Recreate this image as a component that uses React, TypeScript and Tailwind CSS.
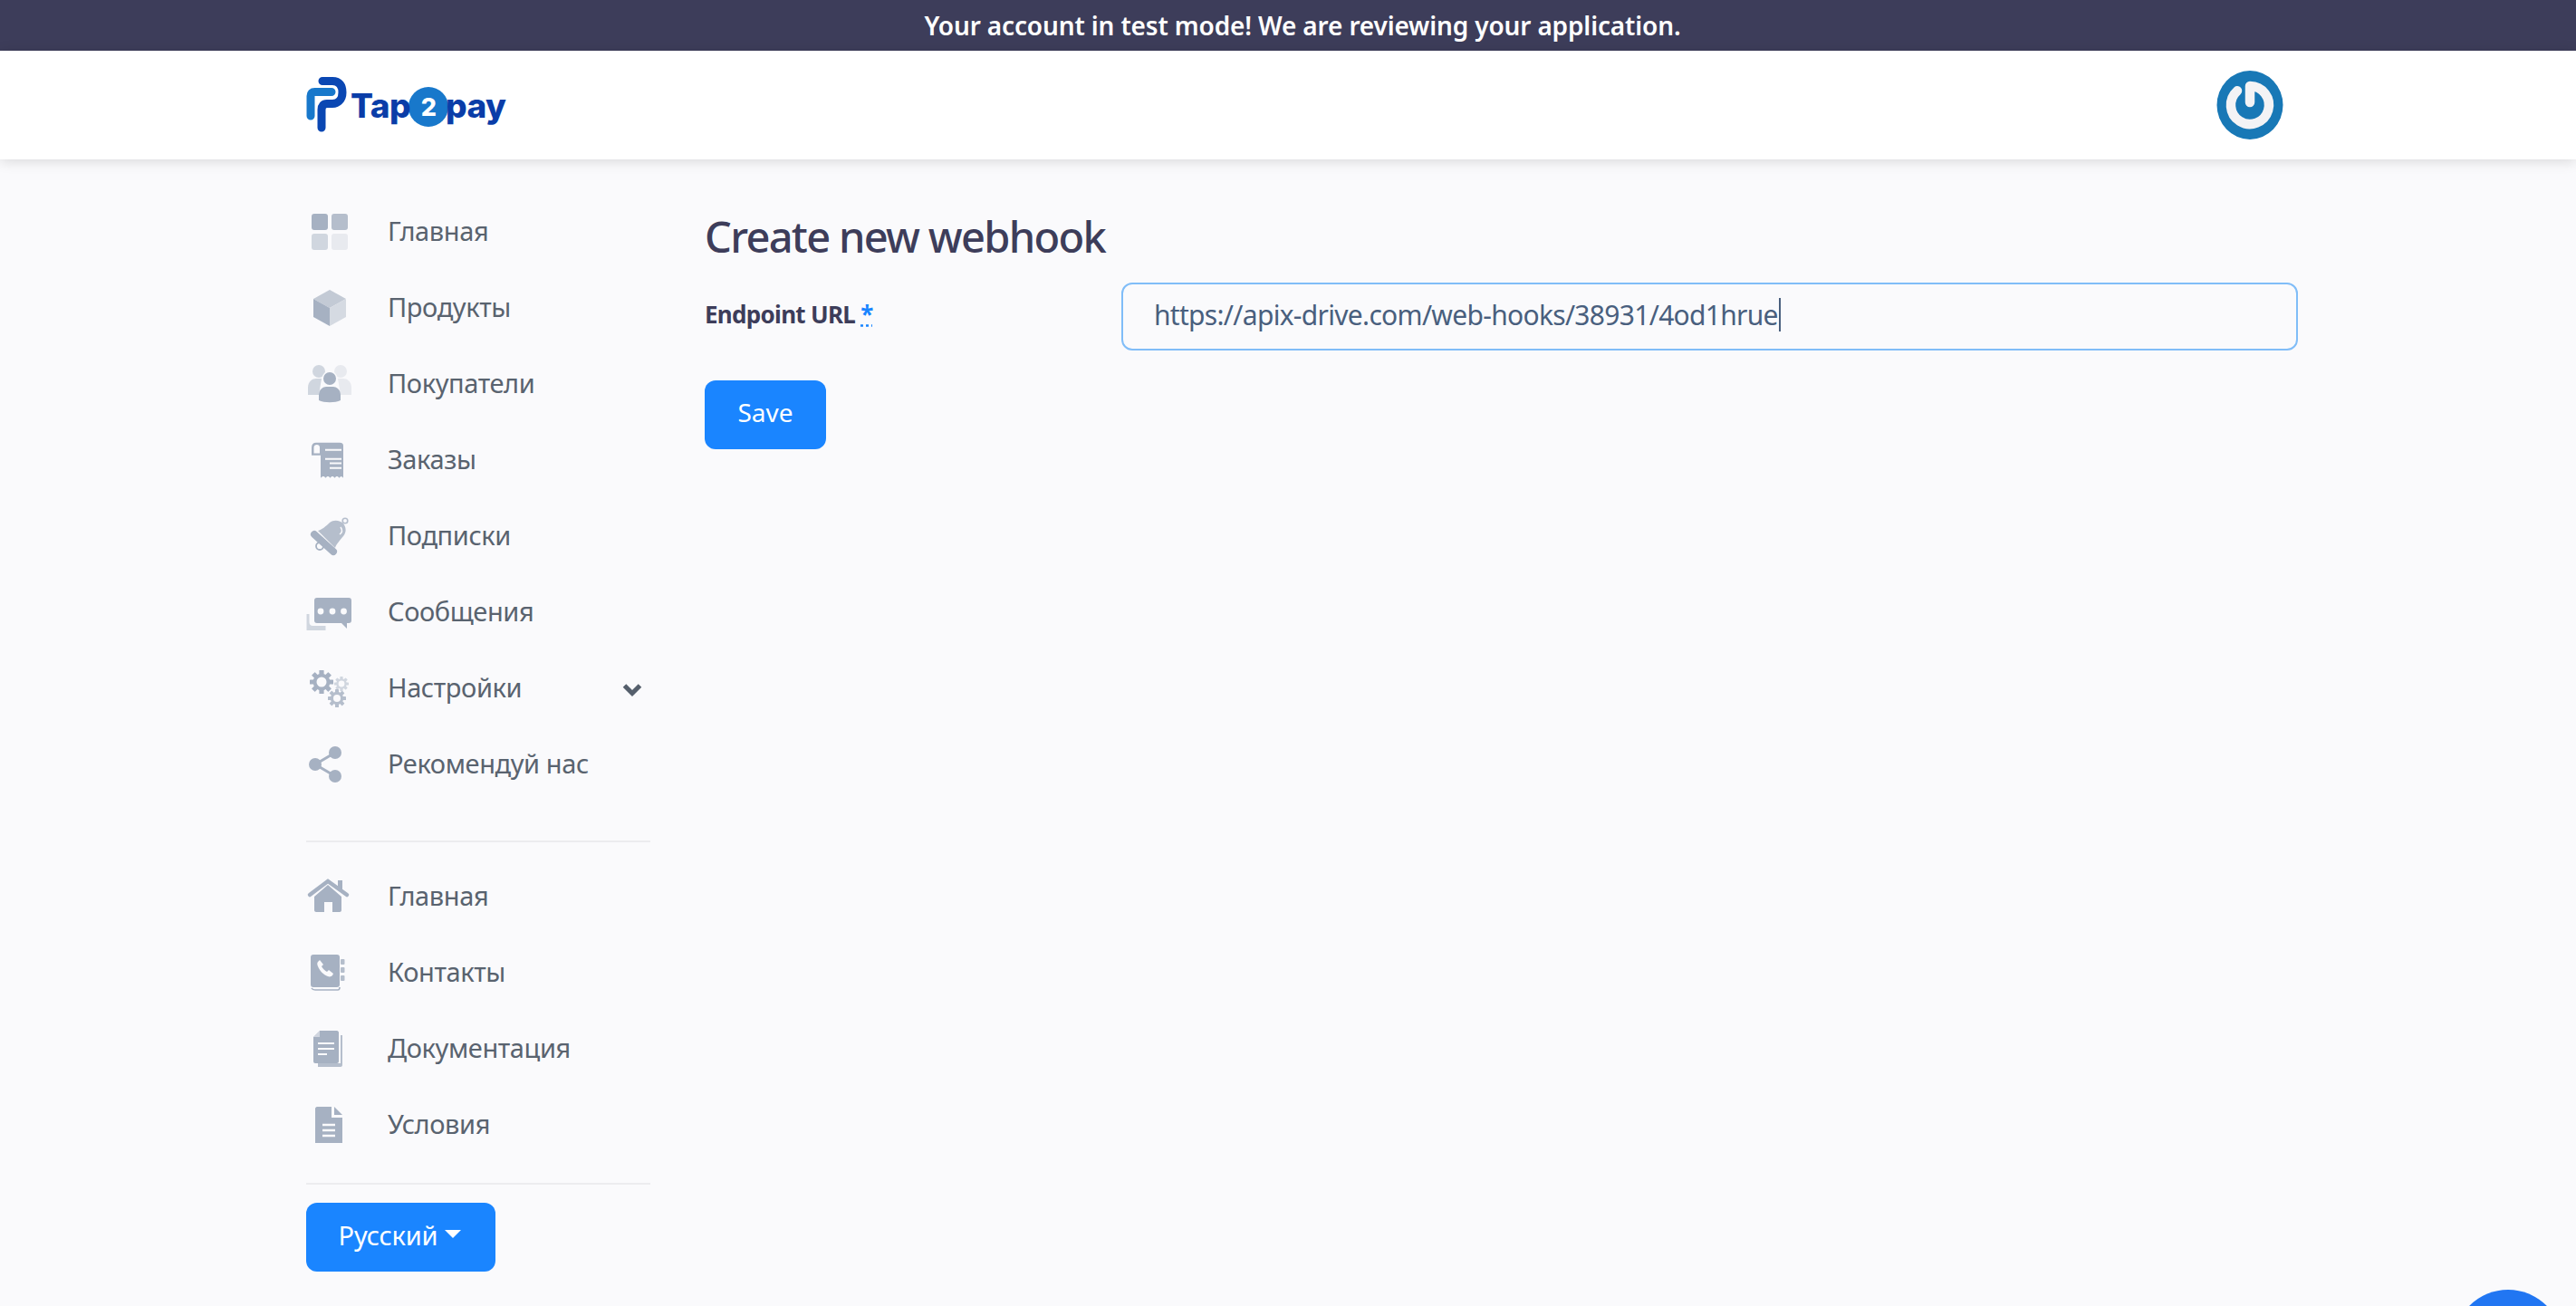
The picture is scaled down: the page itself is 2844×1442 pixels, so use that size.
import React from "react";

const C1 = "#a6b1c2";
const C2 = "#b5becc";
const C3 = "#d0d6df";
const C4 = "#e8eaef";

function Svg({ children }: { children: React.ReactNode }) {
  return (
    <svg width="48" height="48" viewBox="0 0 48 48" className="overflow-visible shrink-0">
      {children}
    </svg>
  );
}

function Gear({ x, y, r, hole, fill }: { x: number; y: number; r: number; hole: number; fill: string }) {
  const teeth = Array.from({ length: 8 }, (_, i) => i * 45);
  return (
    <g transform={`translate(${x} ${y})`}>
      {teeth.map((a) => (
        <rect key={a} x={-r * 0.2} y={-r} width={r * 0.4} height={r * 0.5} fill={fill} transform={`rotate(${a})`} rx={0.6} />
      ))}
      <circle r={r * 0.72} fill={fill} />
      <circle r={hole} fill="#fafafc" />
    </g>
  );
}

const icons: Record<string, React.ReactNode> = {
  grid: (
    <Svg>
      <rect x="4" y="4" width="18" height="18" rx="3" fill={C1} />
      <rect x="26" y="4" width="18" height="18" rx="3" fill={C2} />
      <rect x="4" y="26" width="18" height="18" rx="3" fill={C3} />
      <rect x="26" y="26" width="18" height="18" rx="3" fill={C4} />
    </Svg>
  ),
  cube: (
    <Svg>
      <path d="M24 4 42 14 24 24 6 14Z" fill="#c3cad5" />
      <path d="M6 14 24 24V44L6 34Z" fill={C1} />
      <path d="M42 14 24 24V44L42 34Z" fill="#d5dae2" />
    </Svg>
  ),
  people: (
    <Svg>
      <circle cx="12" cy="10" r="7" fill={C3} />
      <circle cx="36" cy="10" r="7" fill={C4} />
      <path d="M0 36V28C0 21 5 18 9 18H15L12 36Z" fill={C3} />
      <path d="M48 36V28C48 21 43 18 39 18H33L36 36Z" fill={C4} />
      <circle cx="24" cy="18" r="8.5" fill="#fafafc" />
      <circle cx="24" cy="18" r="7" fill={C1} />
      <path d="M12 42V36C12 30 17 27 20 27H28C31 27 36 30 36 36V42C30 45 18 45 12 42Z" fill={C1} />
    </Svg>
  ),
  receipt: (
    <Svg>
      <path d="M4 18.7V10C4 6.5 6 4.7 9 4.7H35C38 4.7 39 6 39 8V43.7C37.5 41.5 36 41.5 34.5 43.7 33 41.5 31 41.5 29.5 43.7 28 41.5 26 41.5 24.5 43.7 23 41.5 21 41.5 19.5 43.7 18 41.5 16 41.5 14 43.7V18.7Z" fill={C1} />
      <path d="M6.5 16.5V10C6.5 8 8 7 9.8 7 11.6 7 13 8 13 10V16.5Z" fill="#fafafc" />
      <path d="M19 12.7H37M19 22.7H37M24 27.5H37M24 32.7H37" stroke="#fafafc" strokeWidth="2" />
    </Svg>
  ),
  bell: (
    <Svg>
      <circle cx="41" cy="7" r="2.8" fill="none" stroke={C2} strokeWidth="1.6" />
      <circle cx="13" cy="35" r="4" fill="none" stroke={C1} strokeWidth="1.8" />
      <path d="M11 18C15 17 20 13 24 9C29 5 36 7 39 10C42 14 43 19 39 24C35 29 31 33 30 37Z" fill={C2} />
      <path d="M7 22 28 41" stroke={C1} strokeWidth="8" strokeLinecap="round" />
      <path d="M36 14C38 17 38 20 35 22" stroke="#fafafc" strokeWidth="1.5" fill="none" />
    </Svg>
  ),
  chat: (
    <Svg>
      <path d="M4 26V44H25V39H11C8 39 7 37 7 35V26Z" fill={C3} transform="translate(-5.5 0)" />
      <path d="M10 8H45C47 8 48 9 48 11V33C48 35 47 36 45 36H43L43 42 37 36H10C8 36 7 35 7 33V11C7 9 8 8 10 8Z" fill={C1} />
      <circle cx="14" cy="23" r="3.4" fill="#fafafc" />
      <circle cx="27" cy="23" r="3.4" fill="#fafafc" />
      <circle cx="39.5" cy="23" r="3.4" fill="#fafafc" />
    </Svg>
  ),
  gears: (
    <Svg>
      <Gear x={15} y={17} r={13} hole={5.5} fill={C1} />
      <Gear x={37} y={19} r={8} hole={3.4} fill={C3} />
      <Gear x={32} y={35} r={10} hole={4} fill={C2} />
    </Svg>
  ),
  share: (
    <Svg>
      <path d="M30 11 8 24 30 37" stroke={C1} strokeWidth="3" fill="none" />
      <circle cx="30" cy="11" r="7" fill={C1} />
      <circle cx="8" cy="24" r="7" fill={C1} />
      <circle cx="30" cy="37" r="7" fill={C1} />
    </Svg>
  ),
  home: (
    <Svg>
      <path d="M7 24 22 11 37 24V39C37 40 36 41 35 41H27V30H18V41H9C8 41 7 40 7 39Z" fill={C1} />
      <path d="M2 22 22 7 43 22" stroke={C1} strokeWidth="4.5" fill="none" strokeLinecap="round" />
      <path d="M33 6H38V17L33 13Z" fill={C1} />
    </Svg>
  ),
  contacts: (
    <Svg>
      <path d="M6 4H32C34 4 35 5 35 7V37C35 39 34 40 32 40H6C4 40 3 39 3 37V7C3 5 4 4 6 4Z" fill={C1} />
      <path d="M4 41C5 43 6 43 8 43H33C34 43 35 42 35 40" stroke={C1} strokeWidth="1.6" fill="none" />
      <rect x="36" y="9" width="4.5" height="6" rx="1" fill={C2} />
      <rect x="36" y="18" width="4.5" height="6" rx="1" fill={C2} />
      <rect x="36" y="27" width="4.5" height="6" rx="1" fill={C2} />
      <path d="M11 12C10 13 10 15 11 17C13 22 17 26 22 28C24 29 26 28 27 27L28 25 23 21 21 23C19 22 16 19 15 17L17 15 13 10Z" fill="#fafafc" />
    </Svg>
  ),
  docs: (
    <Svg>
      <path d="M11 40V44H36C37 44 38 43 38 42V9H36V40Z" fill={C2} />
      <path d="M6 11 13 4H32C33 4 34 5 34 6V38C34 39 33 40 32 40H8C7 40 6 39 6 38Z" fill={C1} />
      <path d="M6 11H13V4Z" fill="#fafafc" opacity="0.5" />
      <path d="M11 18H29M11 24H29M11 30H21" stroke="#fafafc" strokeWidth="2" />
    </Svg>
  ),
  file: (
    <Svg>
      <path d="M10 4H26V16H38V44H8V6C8 5 9 4 10 4Z" fill={C1} />
      <path d="M29 4 38 13H29Z" fill={C1} />
      <path d="M16 24H30M16 30H30M16 36H30" stroke="#fafafc" strokeWidth="2.6" />
    </Svg>
  ),
};

function Item({ icon, label, chevron }: { icon: string; label: string; chevron?: boolean }) {
  return (
    <div className="flex items-center h-[84px]">
      <div className="w-[90px] pl-[2px] shrink-0 flex items-center">{icons[icon]}</div>
      <span className="flex-1 text-[#59636f] text-[29px] leading-none tracking-[-0.4px] pb-[3px]">{label}</span>
      {chevron && (
        <svg width="24" height="16" viewBox="0 0 24 16" className="mr-[8px] mt-[4px]">
          <path d="M3.5 3 12 11.5 20.5 3" stroke="#555f6c" strokeWidth="5" fill="none" />
        </svg>
      )}
    </div>
  );
}

function Logo() {
  return (
    <div className="flex items-center">
      <svg width="46" height="62" viewBox="0 0 46 62" className="shrink-0 overflow-visible">
        <path d="M5 43V21C5 18 6.5 16.5 9.5 16.5H28" stroke="#1878cb" strokeWidth="9" fill="none" strokeLinecap="round" />
        <path d="M18 4.5H29C37 4.5 40 10 40 17C40 25 35 29.5 29 29.5H23C19 29.5 17 32 17 36V56" stroke="#0a47b3" strokeWidth="9" fill="none" strokeLinecap="round" strokeLinejoin="round" />
      </svg>
      <div className="flex items-center ml-[3px] text-[#0a3da8] text-[37px] font-extrabold leading-none font-['Inter',sans-serif] tracking-[-0.5px]">
        <span className="w-[66px] z-20">Tap</span>
        <span className="w-[44px] h-[44px] -ml-[2px] rounded-full bg-[#1878cb] text-white text-[27px] flex items-center justify-center mt-[4px] z-10">2</span>
        <span className="z-20 -ml-[3px]">pay</span>
      </div>
    </div>
  );
}

export default function App() {
  return (
    <div className="relative h-screen overflow-hidden bg-[#fafafc] font-['Noto_Sans',sans-serif]">
      <div className="h-[56px] bg-[#3d3d5a] flex items-center justify-center pl-[32px] text-white text-[28px] font-semibold tracking-[-0.15px]">
        Your account in test mode! We are reviewing your application.
      </div>
      <header className="h-[120px] bg-white shadow-[0_2px_14px_rgba(0,0,0,0.14)] flex items-center justify-between pl-[338px] pr-[331px] relative">
        <Logo />
        <svg width="74" height="76" viewBox="-37 -38 74 76" className="shrink-0 mr-[-8px]">
          <ellipse cx="0" cy="0" rx="36.5" ry="38" fill="#1878b6" />
          <path d="M-14 -15.7A21 21 0 1 0 0 -21V-3" stroke="#f3f3f5" strokeWidth="10.5" fill="none" strokeLinecap="round" strokeLinejoin="round" />
        </svg>
      </header>
      <div className="flex pl-[338px] pr-[307px]">
        <aside className="w-[380px] shrink-0 pt-[38px]">
          <Item icon="grid" label="Главная" />
          <Item icon="cube" label="Продукты" />
          <Item icon="people" label="Покупатели" />
          <Item icon="receipt" label="Заказы" />
          <Item icon="bell" label="Подписки" />
          <Item icon="chat" label="Сообщения" />
          <Item icon="gears" label="Настройки" chevron />
          <Item icon="share" label="Рекомендуй нас" />
          <div className="h-[2px] bg-[#ececef] mt-[42px] mb-[18px]" />
          <Item icon="home" label="Главная" />
          <Item icon="contacts" label="Контакты" />
          <Item icon="docs" label="Документация" />
          <Item icon="file" label="Условия" />
          <div className="h-[2px] bg-[#ececef] mt-[22px] mb-[20px]" />
          <button className="w-[209px] h-[76px] rounded-[12px] bg-[#1a85ff] text-white text-[29px] tracking-[-0.2px] pb-[5px] pr-[2px] flex items-center justify-center gap-[8px]">
            Русский
            <span className="w-0 h-0 border-x-[9px] border-x-transparent border-t-[9px] border-t-white mb-[2px]" />
          </button>
        </aside>
        <main className="flex-1 pl-[60px] pt-[50px]">
          <h1 className="text-[47px] leading-[70px] text-[#3d3d5a] font-medium tracking-[-1.7px]">Create new webhook</h1>
          <div className="flex items-center mt-[16px]">
            <label className="w-[460px] shrink-0 text-[26px] font-bold text-[#3d3d5a] tracking-[-0.7px] -mt-[5px]">
              Endpoint URL <span className="text-[#1a85ff] underline decoration-dotted">*</span>
            </label>
            <div className="flex-1 h-[75px] rounded-[12px] border-2 border-[#80bdf8] px-[34px] pb-[4px] flex items-center text-[30px] text-[#495f7e] tracking-[-0.7px]">
              <span>https://apix-drive.com/web-hooks/38931/4od1hrue</span>
              <span className="w-[2px] h-[37px] bg-[#495f7e] ml-[1px]" />
            </div>
          </div>
          <button className="mt-[33px] w-[134px] h-[76px] rounded-[12px] bg-[#1a85ff] text-white text-[28px] pb-[6px]">Save</button>
        </main>
      </div>
      <div className="absolute right-[15px] -bottom-[102px] w-[120px] h-[120px] rounded-full bg-[#2176f2]" />
    </div>
  );
}
